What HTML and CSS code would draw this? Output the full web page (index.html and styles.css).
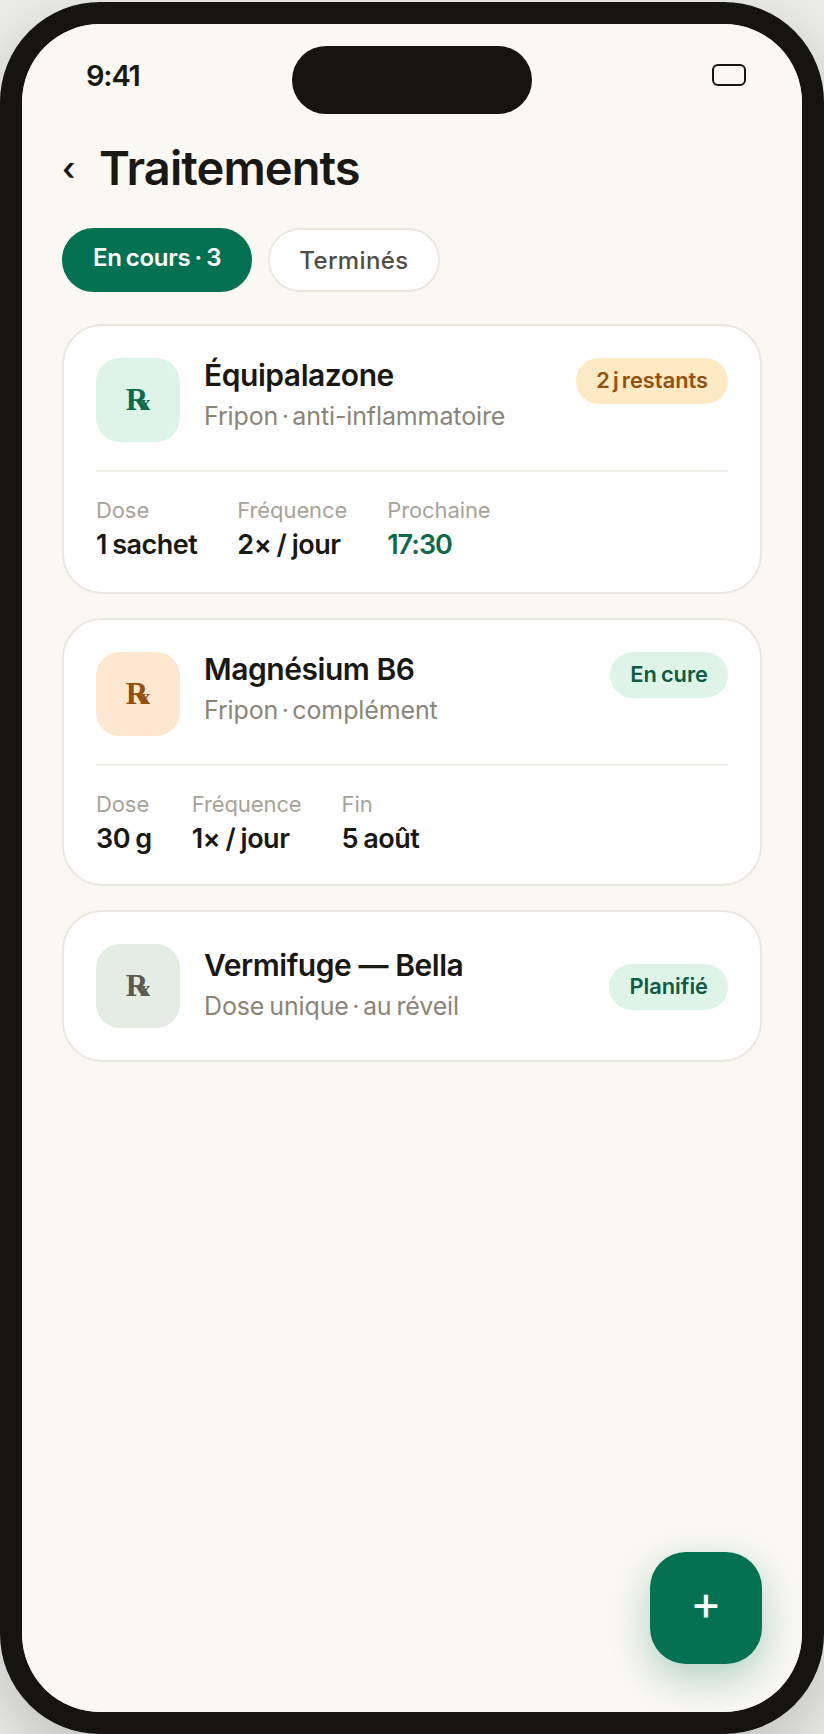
FILE: index.html
```html
<!DOCTYPE html>
<html lang="fr">
<head>
<meta charset="utf-8">
<title>Traitements</title>
<link rel="stylesheet" href="styles.css">
</head>
<body>
<div class="device">
  <main class="screen">
    <span class="island"></span>
    <div class="status">
      <span class="time">9:41</span>
      <span class="battery"></span>
    </div>
    <header class="header">
      <span class="back">‹</span>
      <h1 class="title">Traitements</h1>
    </header>
    <div class="tabs">
      <span class="tab tab-active">En cours · 3</span>
      <span class="tab">Terminés</span>
    </div>
    <section class="list">
      <article class="card">
        <div class="card-top">
          <span class="rx rx-green">R</span>
          <div class="info">
            <div class="name">Équipalazone</div>
            <div class="sub">Fripon<span class="dot">·</span>anti-inflammatoire</div>
          </div>
          <span class="badge badge-amber">2 j restants</span>
        </div>
        <div class="stats">
          <div class="stat"><div class="label">Dose</div><div class="value">1 sachet</div></div>
          <div class="stat"><div class="label">Fréquence</div><div class="value">2× / jour</div></div>
          <div class="stat"><div class="label">Prochaine</div><div class="value value-green">17:30</div></div>
        </div>
      </article>
      <article class="card">
        <div class="card-top">
          <span class="rx rx-orange">R</span>
          <div class="info">
            <div class="name">Magnésium B6</div>
            <div class="sub">Fripon<span class="dot">·</span>complément</div>
          </div>
          <span class="badge badge-green">En cure</span>
        </div>
        <div class="stats">
          <div class="stat"><div class="label">Dose</div><div class="value">30 g</div></div>
          <div class="stat"><div class="label">Fréquence</div><div class="value">1× / jour</div></div>
          <div class="stat"><div class="label">Fin</div><div class="value">5 août</div></div>
        </div>
      </article>
      <article class="card">
        <div class="card-top card-top-center">
          <span class="rx rx-sage">R</span>
          <div class="info">
            <div class="name">Vermifuge — Bella</div>
            <div class="sub">Dose unique<span class="dot">·</span>au réveil</div>
          </div>
          <span class="badge badge-green">Planifié</span>
        </div>
      </article>
    </section>
    <button class="fab">+</button>
  </main>
</div>
</body>
</html>
```

FILE: styles.css
```css
* { box-sizing: border-box; margin: 0; padding: 0; }
html, body { height: 100%; }
body {
  background: #ecece9;
  font-family: "Inter", "Liberation Sans", sans-serif;
  color: #1a1814;
  overflow: hidden;
}
.device {
  width: 824px;
  height: 1732px;
  margin-top: 2px;
  border: 22px solid #15140f;
  border-radius: 100px;
  box-shadow: 0 24px 70px rgba(0, 0, 0, 0.2);
  overflow: hidden;
}
.screen {
  position: relative;
  height: 100%;
  background: #faf8f3;
  border-radius: 78px;
  overflow: hidden;
  padding: 22px 40px 0;
}
.status {
  display: flex;
  align-items: center;
  justify-content: space-between;
  height: 58px;
  padding: 0 16px 0 24px;
}
.time {
  font-size: 29px;
  font-weight: 600;
  letter-spacing: -1.2px;
}
.island {
  position: absolute;
  top: 22px;
  left: 270px;
  width: 240px;
  height: 68px;
  border-radius: 34px;
  background: #15140f;
}
.battery {
  width: 34px;
  height: 22px;
  border: 2px solid #15140f;
  border-radius: 6px;
}
.header {
  display: flex;
  align-items: center;
  margin-top: 36px;
  height: 56px;
}
.back {
  flex: none;
  width: 37px;
  padding-top: 2px;
  font-size: 32px;
  font-weight: 600;
  line-height: 1;
}
.title {
  font-size: 47px;
  font-weight: 600;
  letter-spacing: -0.9px;
  line-height: 56px;
}
.tabs {
  display: flex;
  gap: 16px;
  margin-top: 32px;
}
.tab {
  display: flex;
  align-items: center;
  height: 64px;
  padding: 0 29px;
  border: 2px solid #ece8e0;
  border-radius: 32px;
  background: #fff;
  color: #4f4d46;
  font-size: 24px;
  font-weight: 450;
  letter-spacing: 0.4px;
}
.tab-active {
  background: #047252;
  border-color: #047252;
  color: #fff;
  font-weight: 600;
  letter-spacing: -0.3px;
  padding-bottom: 6px;
  word-spacing: -1.5px;
}
.list {
  display: flex;
  flex-direction: column;
  gap: 24px;
  margin-top: 32px;
}
.card {
  background: #fff;
  border: 2px solid #ece8e0;
  border-radius: 40px;
  padding: 32px;
}
.card-top {
  display: flex;
  align-items: flex-start;
  gap: 24px;
}
.card-top-center { align-items: center; }
.rx {
  flex: none;
  display: flex;
  align-items: baseline;
  justify-content: center;
  width: 84px;
  height: 84px;
  padding-top: 24px;
  border-radius: 24px;
  font-family: "Liberation Serif", "DejaVu Serif", serif;
  font-size: 31px;
  font-weight: 700;
  line-height: 36px;
}
.rx::after {
  content: "x";
  margin-left: -8px;
  font-size: 20px;
}
.rx-green { background: #def4e8; color: #0f6a4c; }
.rx-orange { background: #ffe8d1; color: #92500f; }
.rx-sage { background: #e3ede3; color: #5a5a4e; }
.info { flex: 1; min-width: 0; margin-top: -1px; }
.card-top-center .info { margin-bottom: 1px; }
.card-top-center .badge { margin-top: 2px; }
.name {
  font-size: 30px;
  font-weight: 600;
  line-height: 36px;
  letter-spacing: -0.45px;
}
.sub {
  font-size: 25px;
  line-height: 34px;
  margin-top: 6px;
  color: #8a8578;
  letter-spacing: -0.12px;
  word-spacing: -2px;
}
.dot { margin: 0 3.5px; }
.badge {
  flex: none;
  display: flex;
  align-items: center;
  height: 46px;
  padding: 0 20px 2px;
  border-radius: 23px;
  font-size: 21.8px;
  font-weight: 600;
}
.badge-amber { background: #fdeac5; color: #92500f; word-spacing: -2.4px; }
.badge-green { background: #def4e8; color: #0f5c45; word-spacing: -1.5px; }
.stats {
  display: flex;
  gap: 40px;
  margin-top: 28px;
  margin-bottom: -4px;
  padding-top: 24px;
  border-top: 2px solid #f0ede6;
}
.label {
  font-size: 22px;
  line-height: 28px;
  color: #a8a398;
  letter-spacing: -0.1px;
}
.value {
  font-size: 27px;
  font-weight: 600;
  line-height: 34px;
  margin-top: 4px;
  letter-spacing: -0.5px;
  word-spacing: -1px;
}
.value-green {
  color: #0f6a4c;
  letter-spacing: -1px;
  padding-bottom: 2px;
}
.fab {
  position: absolute;
  right: 40px;
  bottom: 48px;
  width: 112px;
  height: 112px;
  padding-bottom: 10px;
  border: 0;
  border-radius: 36px;
  background: #047252;
  color: #fff;
  font-family: inherit;
  font-size: 48px;
  font-weight: 400;
  line-height: 1;
  box-shadow: 0 14px 40px rgba(4, 114, 82, 0.3);
}
```
